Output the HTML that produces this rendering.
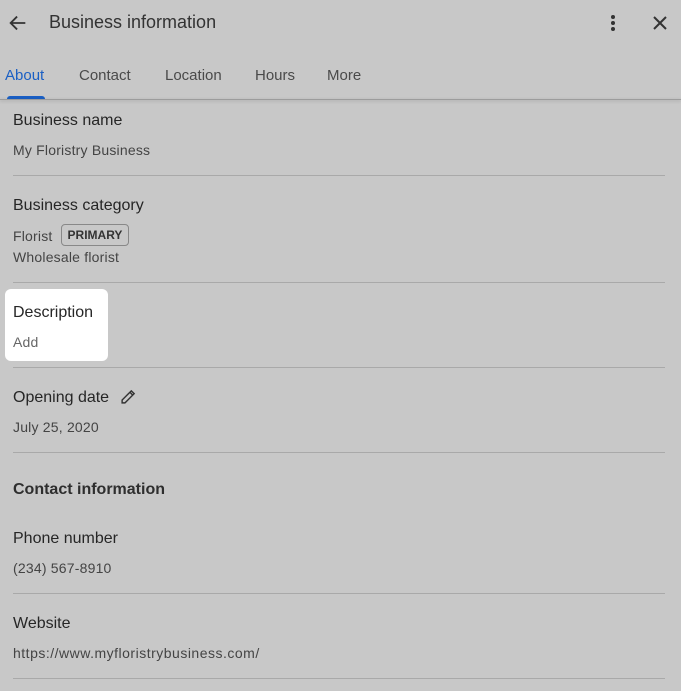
<!DOCTYPE html><html><head><style>
body{margin:0;width:681px;height:691px;background:#c8c8c8;font-family:"Liberation Sans",sans-serif;color:#262626;overflow:hidden;position:relative}
.a{position:absolute;white-space:nowrap}
.l{font-size:16px;color:#262626}
.v{font-size:14px;color:#444;letter-spacing:.2px}
.d{position:absolute;left:13px;width:652px;height:1px;background:#a9a9a9}
.t{font-size:15px;color:#4a4a4a;top:67px}
</style></head><body>
<svg class="a" style="left:7px;top:12px" width="22" height="22" viewBox="0 0 24 24"><path d="M20 12H5M11 5l-7 7 7 7" stroke="#333" stroke-width="2" fill="none"/></svg>
<div class="a" style="left:49px;top:12px;font-size:18px;color:#333">Business information</div>
<svg class="a" style="left:605px;top:13px" width="16" height="20"><circle cx="8" cy="4" r="2" fill="#333"/><circle cx="8" cy="10" r="2" fill="#333"/><circle cx="8" cy="16" r="2" fill="#333"/></svg>
<svg class="a" style="left:652px;top:15px" width="16" height="16"><path d="M2 2L14 14M14 2L2 14" stroke="#333" stroke-width="2"/></svg>
<div class="a t" style="left:5px;color:#1a5fc4">About</div>
<div class="a t" style="left:79px">Contact</div>
<div class="a t" style="left:165px">Location</div>
<div class="a t" style="left:255px">Hours</div>
<div class="a t" style="left:327px">More</div>
<div class="a" style="left:7px;top:96px;width:38px;height:3px;background:#1a5fc4;border-radius:3px 3px 0 0"></div>
<div class="a" style="left:0;top:99px;width:681px;height:1px;background:#9c9c9c;box-shadow:0 1px 3px rgba(0,0,0,.25)"></div>
<div class="a l" style="left:13px;top:112px">Business name</div>
<div class="a v" style="left:13px;top:142px">My Floristry Business</div>
<div class="d" style="top:175px"></div>
<div class="a l" style="left:13px;top:197px">Business category</div>
<div class="a v" style="left:13px;top:228px">Florist</div>
<div class="a" style="left:61px;top:224px;height:20px;width:66px;border:1px solid #888;border-radius:4px;font-size:12px;font-weight:bold;line-height:21px;text-align:center;color:#333">PRIMARY</div>
<div class="a v" style="left:13px;top:249px">Wholesale florist</div>
<div class="d" style="top:282px"></div>
<div class="a" style="left:5px;top:289px;width:103px;height:72px;background:#fff;border-radius:6px"></div>
<div class="a l" style="left:13px;top:304px">Description</div>
<div class="a v" style="left:13px;top:334px;color:#666">Add</div>
<div class="d" style="top:367px"></div>
<div class="a l" style="left:13px;top:389px">Opening date</div>
<svg class="a" style="left:120px;top:388px" width="17" height="17" viewBox="0 0 24 24"><path d="M3 21v-4L16 4l4 4L7 21zM14 6l4 4" stroke="#333" stroke-width="2" fill="none"/></svg>
<div class="a v" style="left:13px;top:419px">July 25, 2020</div>
<div class="d" style="top:452px"></div>
<div class="a" style="left:13px;top:481px;font-size:16px;font-weight:bold;color:#2e2e2e">Contact information</div>
<div class="a l" style="left:13px;top:530px">Phone number</div>
<div class="a v" style="left:13px;top:560px">(234) 567-8910</div>
<div class="d" style="top:593px"></div>
<div class="a l" style="left:13px;top:615px">Website</div>
<div class="a v" style="left:13px;top:645px;letter-spacing:.5px">https://www.myfloristrybusiness.com/</div>
<div class="d" style="top:678px"></div>
</body></html>
